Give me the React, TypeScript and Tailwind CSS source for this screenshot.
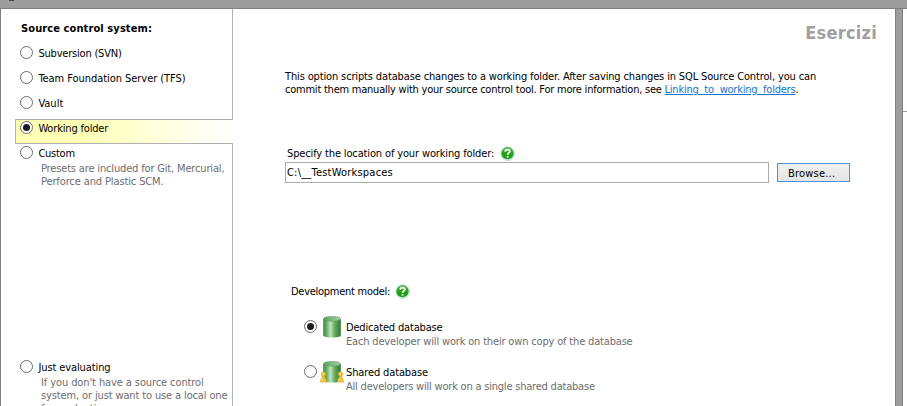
import React from 'react';

function Radio({ checked = false }: { checked?: boolean }) {
  return (
    <span className="flex h-[13px] w-[13px] shrink-0 items-center justify-center rounded-full border border-[#6a6a6a] bg-white">
      {checked && <span className="h-[7px] w-[7px] rounded-full bg-[#1c1c1c]" />}
    </span>
  );
}

function Line({ children, className = '' }: { children: React.ReactNode; className?: string }) {
  return <div className={`h-[13px] whitespace-pre leading-[13px] ${className}`}>{children}</div>;
}

function SideOption({ label, checked = false, spacing = '' }: { label: string; checked?: boolean; spacing?: string }) {
  return (
    <div className="flex h-[25px] pt-[6px] pl-[19px]">
      <Radio checked={checked} />
      <Line className={`mt-px ml-[5.4px] ${spacing}`}>{label}</Line>
    </div>
  );
}

function Help() {
  return (
    <svg width="16" height="16" viewBox="0 0 16 16" className="shrink-0">
      <defs>
        <linearGradient id="help" x1="0" y1="0" x2="0" y2="1">
          <stop offset="0" stopColor="#5cc352" />
          <stop offset="0.45" stopColor="#27a51b" />
          <stop offset="1" stopColor="#169808" />
        </linearGradient>
      </defs>
      <circle cx="7.8" cy="7.7" r="7" fill="#dfe8f2" stroke="#b9cade" strokeWidth="0.6" />
      <circle cx="7.5" cy="7.2" r="6.1" fill="url(#help)" />
      <path d="M5.2 5.6C5.3 3 9.8 3 9.8 5.4C9.8 7 7.6 6.9 7.6 8.8" fill="none" stroke="#fff" strokeWidth="1.7" />
      <rect x="6.7" y="9.9" width="1.8" height="1.7" fill="#fff" />
    </svg>
  );
}

function Pawn({ x }: { x: number }) {
  return (
    <g transform={`translate(${x} 10.5)`} fill="#ecc53a" stroke="#c39a20" strokeWidth="0.5">
      <path d="M2.2 4.2L1.9 6.2Q0.4 7.4 0.4 10.6H6.6Q6.6 7.4 5.1 6.2L4.8 4.2Z" />
      <circle cx="3.5" cy="2.6" r="2.3" />
      <circle cx="3" cy="2.1" r="0.9" fill="#fae692" stroke="none" />
      <path d="M2.4 7.4Q1.7 8.3 1.7 9.6" fill="none" stroke="#fae692" strokeWidth="0.8" />
    </g>
  );
}

function Database({ shared = false }: { shared?: boolean }) {
  return (
    <svg width="24" height="22" viewBox="0 0 24 22" className="shrink-0">
      <defs>
        <linearGradient id="body">
          <stop offset="0" stopColor="#3c873d" />
          <stop offset="0.2" stopColor="#67b067" />
          <stop offset="0.42" stopColor="#c0e3bd" />
          <stop offset="0.66" stopColor="#62ab60" />
          <stop offset="1" stopColor="#2f792f" />
        </linearGradient>
        <linearGradient id="lid">
          <stop offset="0" stopColor="#5aa45b" />
          <stop offset="1" stopColor="#a5d0a3" />
        </linearGradient>
      </defs>
      <path d="M3.2 3V19.2C3.2 22.4 20.8 22.4 20.8 19.2V3Z" fill="url(#body)" />
      <ellipse cx="12" cy="2.8" rx="8.6" ry="2.4" fill="url(#lid)" stroke="#4d964e" strokeWidth="0.5" />
      {shared && <Pawn x={0} />}
      {shared && <Pawn x={17} />}
    </svg>
  );
}

function Model({ title, detail, checked = false, shared = false, titleClass, detailClass }: {
  title: string; detail: string; checked?: boolean; shared?: boolean; titleClass: string; detailClass: string;
}) {
  return (
    <div className="flex h-[45px] pl-[71px]">
      <div className="pt-[4px]"><Radio checked={checked} /></div>
      <div className="ml-[3px]"><Database shared={shared} /></div>
      <div className="ml-[2px] pt-[5px]">
        <Line className={titleClass}>{title}</Line>
        <Line className={`mt-px text-[#6d6d6d] ${detailClass}`}>{detail}</Line>
      </div>
    </div>
  );
}

export default function App() {
  return (
    <div className="flex h-[406px] w-[907px] flex-col overflow-hidden bg-white font-['DejaVu_Sans_Condensed','DejaVu_Sans',sans-serif] text-[11px] text-black [font-stretch:condensed]">
      <div className="h-[9px] shrink-0 border-b border-[#808080] bg-[#9d9d9d]">
        <div className="ml-[9px] h-px w-[5px] bg-[#52444d]" />
      </div>
      <div className="flex h-[397px]">
        <aside className="flex w-[233px] shrink-0 flex-col border-l border-[#808080]">
          <div className="h-[110px] shrink-0 border-r border-[#b0b0b0] pt-[13px]">
            <Line className="mb-[5px] pl-[20px] font-bold tracking-[0.1px]">Source control system:</Line>
            <SideOption label="Subversion (SVN)" spacing="tracking-[-0.2px]" />
            <SideOption label="Team Foundation Server (TFS)" spacing="tracking-[-0.05px]" />
            <SideOption label="Vault" />
          </div>
          <div className="ml-[14px] h-[25px] shrink-0 border border-r-0 border-[#b0b0b0] bg-linear-to-r from-[#ffffb5] from-30% to-white">
            <div className="-mt-[5px] -ml-[15px]"><SideOption label="Working folder" spacing="tracking-[-0.17px]" checked /></div>
          </div>
          <div className="flex h-[262px] shrink-0 flex-col border-r border-[#b0b0b0]">
            <div className="-mt-[4px]"><SideOption label="Custom" spacing="tracking-[-0.25px]" /></div>
            <div className="-mt-[3px] pl-[40px] text-[#6d6d6d]">
              <Line className="tracking-[-0.16px]">Presets are included for Git, Mercurial,</Line>
              <Line className="tracking-[-0.12px]">Perforce and Plastic SCM.</Line>
            </div>
            <div className="mt-[166px]"><SideOption label="Just evaluating" spacing="tracking-[-0.1px]" /></div>
            <div className="-mt-[3px] pl-[40px] text-[#6d6d6d]">
              <Line className="tracking-[-0.1px]">If you don't have a source control</Line>
              <Line className="tracking-[-0.13px]">system, or just want to use a local one</Line>
              <Line className="tracking-[-0.12px]">for evaluation.</Line>
            </div>
          </div>
        </aside>
        <main className="w-[662px] shrink-0">
          <div className="flex h-[61px] justify-end pt-[12px] pr-[18px] text-[18px] leading-[24px] font-bold tracking-[0.25px] text-[#a0a0a0]">Esercizi</div>
          <div className="h-[75px] pl-[52px]">
            <Line className="tracking-[-0.14px]">This option scripts database changes to a working folder. After saving changes in SQL Source Control, you can</Line>
            <Line className="tracking-[-0.23px]">commit them manually with your source control tool. For more information, see <a className="text-[#1673d2] underline">Linking  to  working  folders</a>.</Line>
          </div>
          <div className="flex h-[17px] pt-px pl-[54px]">
            <Line className="mt-px w-[213px] tracking-[-0.14px]">Specify the location of your working folder:</Line>
            <Help />
          </div>
          <div className="flex pl-[52px]">
            <div className="h-[21px] w-[484px] border border-[#ababab] pt-[3px] pl-px"><Line className="tracking-[0.21px]">C:\__TestWorkspaces</Line></div>
            <button className="mt-px ml-[8px] h-[19px] w-[73px] border border-[#4a90e2] bg-linear-to-b from-[#f0f0f0] to-[#e5e5e5] pt-[2px] pl-[10px] text-left"><Line className="tracking-[0.2px]">Browse...</Line></button>
          </div>
          <div className="mt-[101px] flex h-[16px] pl-[58px]">
            <Line className="mt-px w-[104px] tracking-[-0.27px]">Development model:</Line>
            <Help />
          </div>
          <div className="mt-[16px]">
            <Model title="Dedicated database" detail="Each developer will work on their own copy of the database" checked titleClass="tracking-[-0.17px]" detailClass="tracking-[-0.17px]" />
            <Model title="Shared database" detail="All developers will work on a single shared database" shared titleClass="tracking-[-0.13px]" detailClass="tracking-[-0.21px]" />
          </div>
        </main>
        <div className="w-[8px] shrink-0 border-x border-[#808080] bg-[#9d9d9d]" />
        <div className="h-[103px] grow border-b border-[#a0a0a0]" />
      </div>
    </div>
  );
}
